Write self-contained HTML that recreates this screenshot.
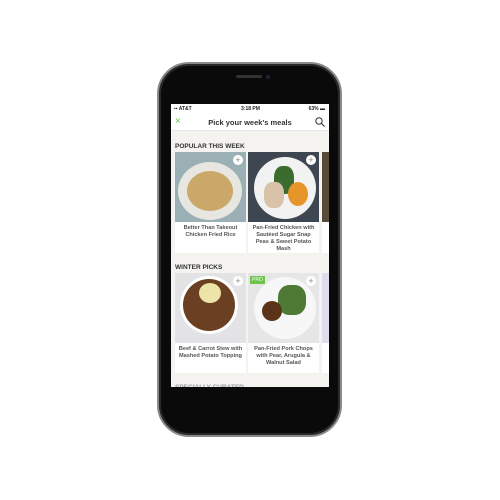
<!DOCTYPE html>
<html><head><style>
*{margin:0;padding:0;box-sizing:border-box}
body{width:500px;height:500px;background:#fff;position:relative;overflow:hidden;font-family:"Liberation Sans",sans-serif}
.phone{position:absolute;left:157px;top:62px;width:185px;height:375px;border-radius:32px;background:#0a0a0a;border:2px solid #8a8a8a;box-shadow:inset 0 0 0 2px #2a2a2a}
.screen{position:absolute;left:171px;top:104px;width:158px;height:283px;background:#f4f3ef;overflow:hidden}
.spk{position:absolute;left:236px;top:75px;width:26px;height:3px;border-radius:2px;background:#333}
.cam{position:absolute;left:266px;top:75px;width:4px;height:4px;border-radius:50%;background:#223}
.status{position:absolute;left:0;top:0;width:158px;height:10px;background:#fff;font-size:5px;font-weight:bold;color:#222}
.hdr{position:absolute;left:0;top:10px;width:158px;height:17px;background:#fff;border-bottom:1px solid #e6e6e6}
.title{position:absolute;left:0;width:158px;top:4px;text-align:center;font-size:7.5px;font-weight:bold;color:#333}
h3{position:absolute;left:4px;font-size:6.5px;font-weight:bold;color:#333}
.card{position:absolute;width:71px;background:#fff}
.img{width:71px;height:70px;position:relative;overflow:hidden}
.plus{position:absolute;right:3px;top:3px;width:10px;height:10px;border-radius:50%;background:#fff;color:#888;font-size:9px;line-height:10px;text-align:center}
.cap{font-size:5.6px;font-weight:bold;color:#555;text-align:center;padding:3px 2px;line-height:1.25}
.pro{position:absolute;left:2px;top:3px;background:#6cc44a;color:#fff;font-size:5px;padding:1px 2px}
</style></head><body>
<div class="phone"></div>
<div class="spk"></div><div class="cam"></div>
<div class="screen">
 <div class="status"><span style="position:absolute;left:3px;top:2px">▪▪ AT&amp;T</span><span style="position:absolute;left:70px;top:2px">3:18 PM</span><span style="position:absolute;right:4px;top:2px">63% ▬</span></div>
 <div class="hdr"><span style="position:absolute;left:4px;top:2px;color:#6cc44a;font-size:10px">×</span><div class="title">Pick your week's meals</div>
 <svg style="position:absolute;right:4px;top:3px" width="10" height="10" viewBox="0 0 10 10"><circle cx="4" cy="4" r="3.2" fill="none" stroke="#333" stroke-width="1"/><path d="M6.4 6.4L9.5 9.5" stroke="#333" stroke-width="1.1"/></svg></div>
 <h3 style="top:39px">POPULAR THIS WEEK</h3>
 <div class="card" style="left:4px;top:48px;height:101px"><div class="img" style="background:#9bb0b5"><div style="position:absolute;left:3px;top:10px;width:64px;height:58px;border-radius:50%;background:#e8e6e0"></div><div style="position:absolute;left:12px;top:19px;width:46px;height:40px;border-radius:50%;background:#c9a86a"></div><div class="plus">+</div></div><div class="cap">Better Than Takeout Chicken Fried Rice</div></div>
 <div class="card" style="left:77px;top:48px;height:101px"><div class="img" style="background:#3e4652"><div style="position:absolute;left:6px;top:5px;width:62px;height:62px;border-radius:50%;background:#f2f2f2"></div><div style="position:absolute;left:26px;top:14px;width:20px;height:28px;background:#3c6b2e;border-radius:40%"></div><div style="position:absolute;left:40px;top:30px;width:20px;height:24px;background:#e6952b;border-radius:50%"></div><div style="position:absolute;left:16px;top:30px;width:20px;height:26px;background:#d9c3a8;border-radius:40%"></div><div class="plus">+</div></div><div class="cap">Pan-Fried Chicken with Sautéed Sugar Snap Peas &amp; Sweet Potato Mash</div></div>
 <div class="card" style="left:151px;top:48px;height:101px"><div class="img" style="background:#5a4a3a"></div></div>
 <h3 style="top:160px">WINTER PICKS</h3>
 <div class="card" style="left:4px;top:169px;height:100px"><div class="img" style="background:#e3e3e6"><div style="position:absolute;left:5px;top:3px;width:58px;height:58px;border-radius:50%;background:#fff"></div><div style="position:absolute;left:8px;top:6px;width:52px;height:52px;border-radius:50%;background:#6b3f22"></div><div style="position:absolute;left:24px;top:10px;width:22px;height:20px;border-radius:50%;background:#eee3a8"></div><div class="plus">+</div></div><div class="cap">Beef &amp; Carrot Stew with Mashed Potato Topping</div></div>
 <div class="card" style="left:77px;top:169px;height:100px"><div class="img" style="background:#e6e6e6"><div style="position:absolute;left:6px;top:4px;width:62px;height:62px;border-radius:50%;background:#f7f7f7"></div><div style="position:absolute;left:30px;top:12px;width:28px;height:30px;background:#4f7a35;border-radius:40%"></div><div style="position:absolute;left:14px;top:28px;width:20px;height:20px;background:#5a3318;border-radius:50%"></div><div class="pro">PRO</div><div class="plus">+</div></div><div class="cap">Pan-Fried Pork Chops with Pear, Arugula &amp; Walnut Salad</div></div>
 <div class="card" style="left:151px;top:169px;height:100px"><div class="img" style="background:#dde"></div></div>
 <h3 style="top:280px;color:#999">SPECIALLY CURATED</h3>
</div>
</body></html>
